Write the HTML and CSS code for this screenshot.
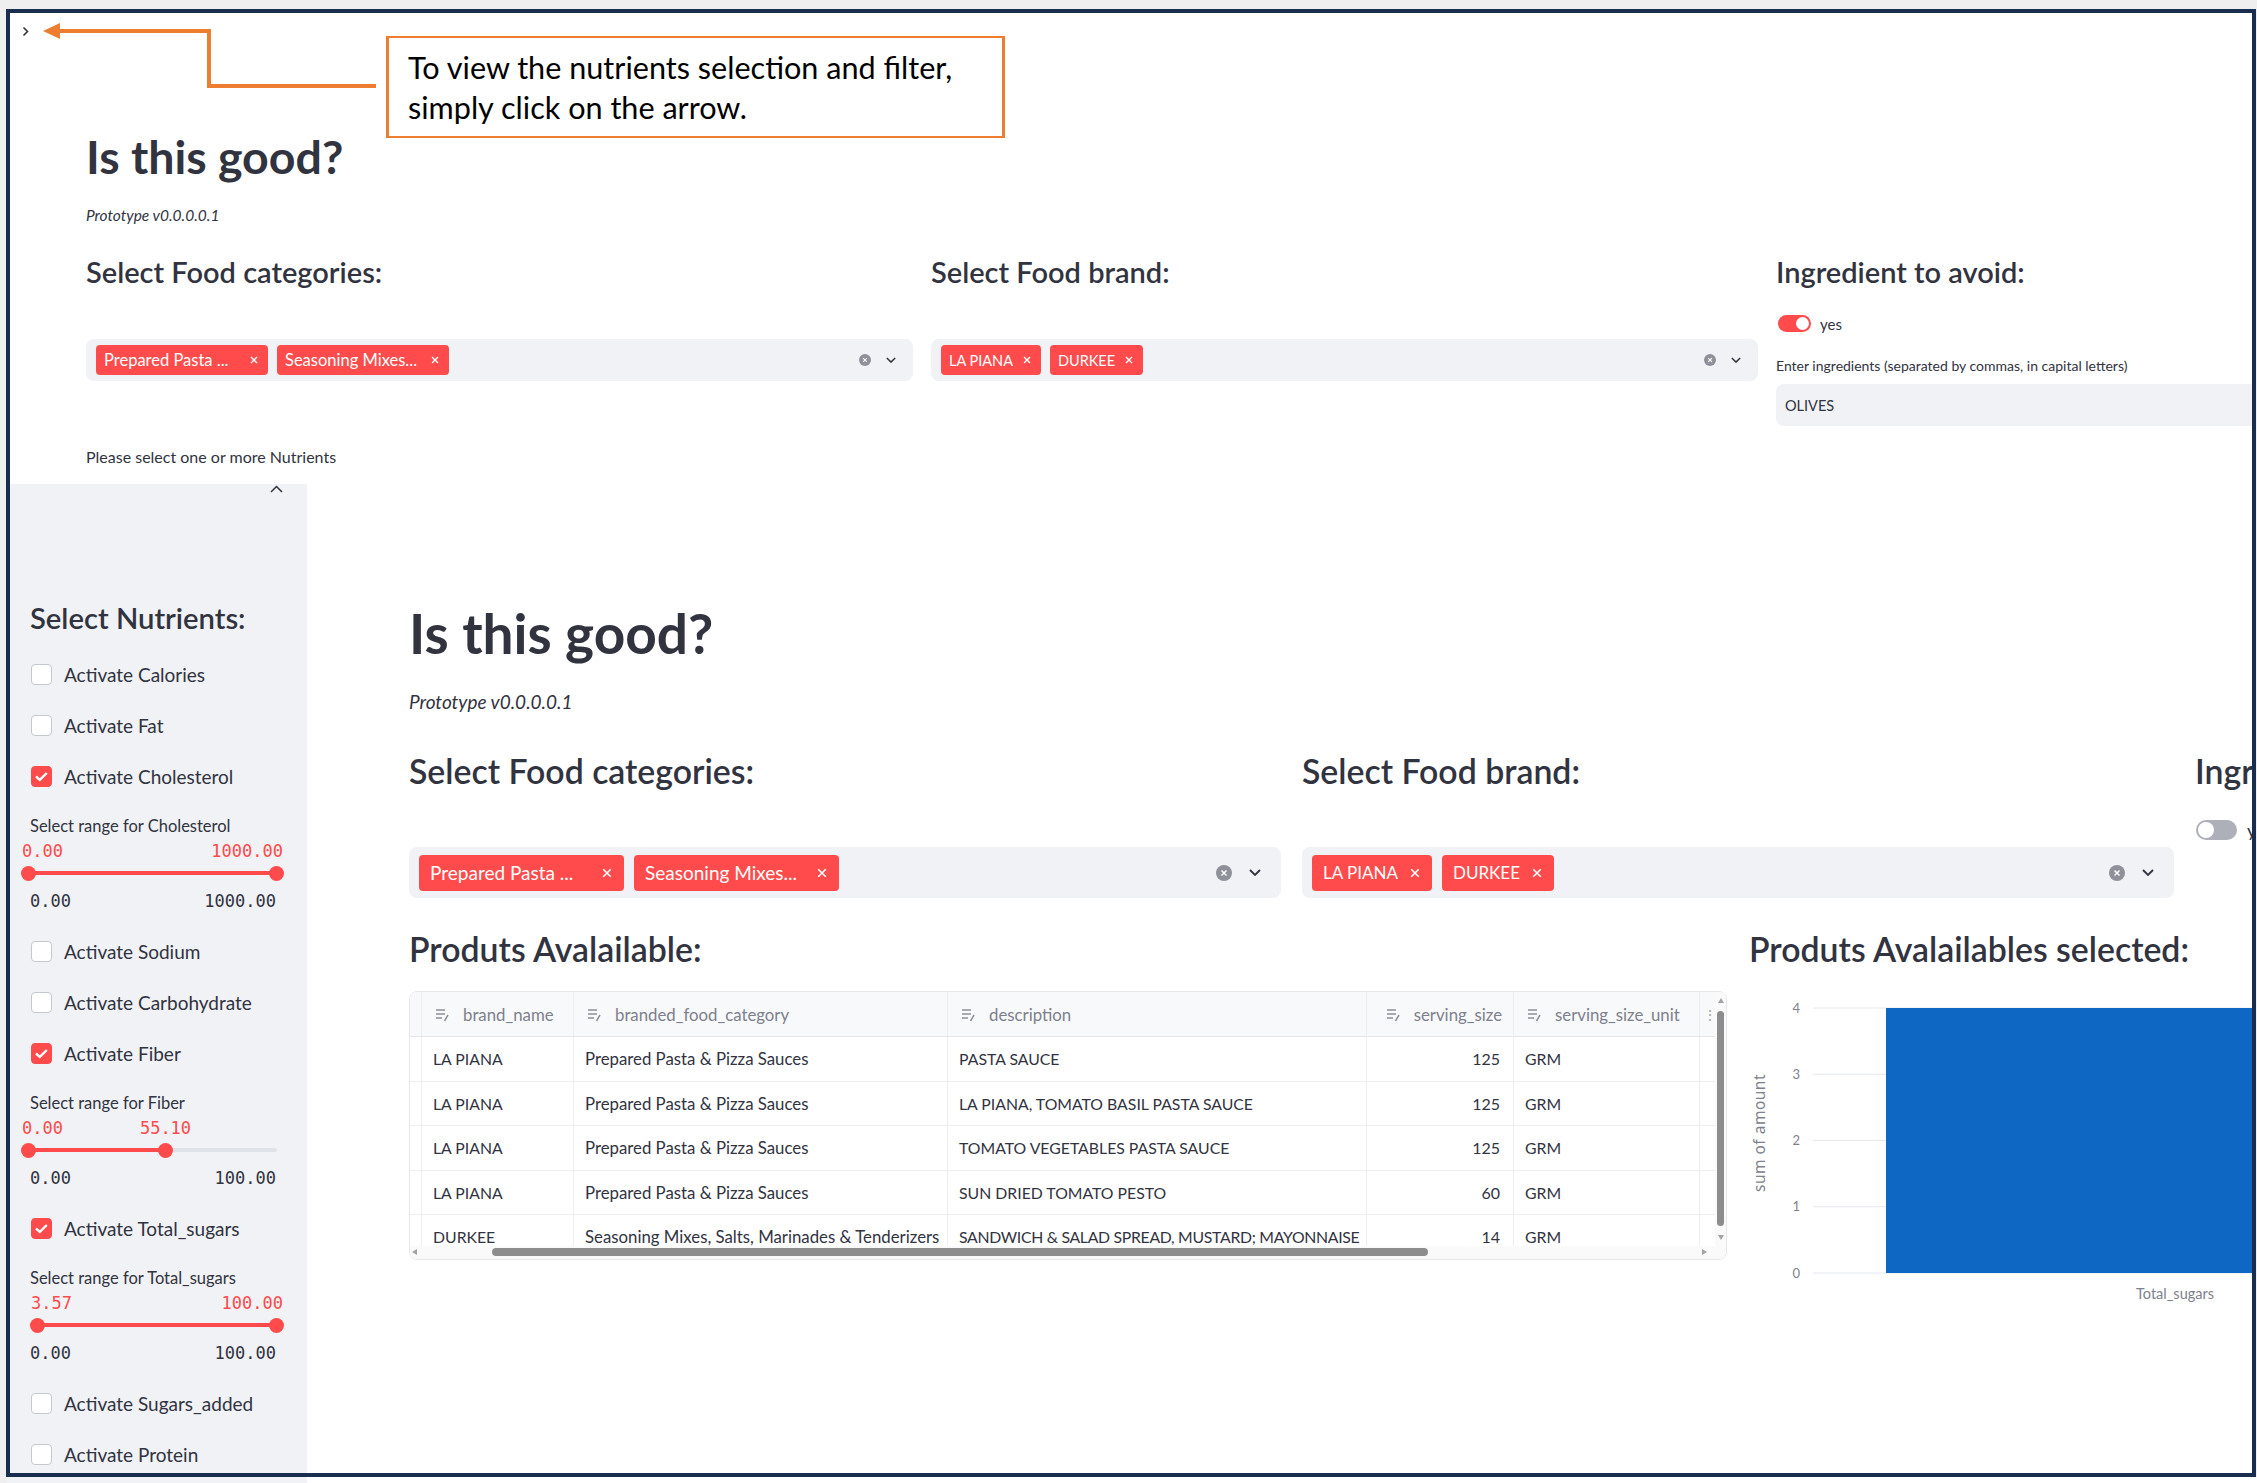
FILE: index.html
```html
<!DOCTYPE html>
<html lang="en">
<head>
<meta charset="utf-8">
<title>Is this good?</title>
<link rel="stylesheet" href="styles.css">
</head>
<body>
<div class="frame">
  <section class="top">
    <div class="collapse-bar">
      <svg class="chev-right" width="7" height="11" viewBox="0 0 7 11"><path d="M1.5 1.5 L5.5 5.5 L1.5 9.5" fill="none" stroke="#31333f" stroke-width="1.6"/></svg>
    </div>
    <div class="top-content">
      <h1 class="h1-sm">Is this good?</h1>
      <p class="proto proto-sm">Prototype v0.0.0.0.1</p>
      <div class="cols-sm">
        <div class="col-sm">
          <h3 class="h3-sm">Select Food categories:</h3>
          <div class="ms ms-sm">
            <span class="tag tag-sm tag-fixed-sm"><span class="tag-text">Prepared Pasta ...</span><svg class="tag-x" width="8" height="8" viewBox="0 0 8 8"><path d="M1 1l6 6M7 1l-6 6" stroke="#fff" stroke-width="1.4"/></svg></span>
            <span class="tag tag-sm tag-fixed-sm"><span class="tag-text">Seasoning Mixes...</span><svg class="tag-x" width="8" height="8" viewBox="0 0 8 8"><path d="M1 1l6 6M7 1l-6 6" stroke="#fff" stroke-width="1.4"/></svg></span>
            <span class="ms-icons ms-icons-sm">
              <svg width="12" height="12" viewBox="0 0 16 16"><circle cx="8" cy="8" r="8" fill="#8e909a"/><path d="M5.5 5.5l5 5M10.5 5.5l-5 5" stroke="#fff" stroke-width="1.6"/></svg>
              <svg width="10" height="6" viewBox="0 0 12 7"><path d="M1 1l5 5 5-5" fill="none" stroke="#31333f" stroke-width="1.8"/></svg>
            </span>
          </div>
        </div>
        <div class="col-sm">
          <h3 class="h3-sm">Select Food brand:</h3>
          <div class="ms ms-sm">
            <span class="tag tag-sm"><span class="tag-text">LA PIANA</span><svg class="tag-x" width="8" height="8" viewBox="0 0 8 8"><path d="M1 1l6 6M7 1l-6 6" stroke="#fff" stroke-width="1.4"/></svg></span>
            <span class="tag tag-sm"><span class="tag-text">DURKEE</span><svg class="tag-x" width="8" height="8" viewBox="0 0 8 8"><path d="M1 1l6 6M7 1l-6 6" stroke="#fff" stroke-width="1.4"/></svg></span>
            <span class="ms-icons ms-icons-sm">
              <svg width="12" height="12" viewBox="0 0 16 16"><circle cx="8" cy="8" r="8" fill="#8e909a"/><path d="M5.5 5.5l5 5M10.5 5.5l-5 5" stroke="#fff" stroke-width="1.6"/></svg>
              <svg width="10" height="6" viewBox="0 0 12 7"><path d="M1 1l5 5 5-5" fill="none" stroke="#31333f" stroke-width="1.8"/></svg>
            </span>
          </div>
        </div>
        <div class="col-sm">
          <h3 class="h3-sm">Ingredient to avoid:</h3>
          <div class="toggle-row toggle-row-sm">
            <span class="toggle toggle-sm on"><span class="knob"></span></span>
            <span>yes</span>
          </div>
          <div class="input-label-sm">Enter ingredients (separated by commas, in capital letters)</div>
          <div class="text-input-sm">OLIVES</div>
        </div>
      </div>
      <p class="note-sm">Please select one or more Nutrients</p>
    </div>

    <svg class="annot-arrow" width="400" height="90" viewBox="0 0 400 90">
      <polyline points="366,73 199,73 199,18 48,18" fill="none" stroke="#ed7d31" stroke-width="4" stroke-linejoin="miter"/>
      <polygon points="33,18 50,10 50,26" fill="#ed7d31"/>
    </svg>
    <div class="callout">To view the nutrients selection and filter,<br>simply click on the arrow.</div>
  </section>

  <section class="app">
    <aside class="sidebar">
      <div class="side-collapse">
        <svg width="13" height="8" viewBox="0 0 13 8"><path d="M1 7 L6.5 1.5 L12 7" fill="none" stroke="#31333f" stroke-width="1.5"/></svg>
      </div>
      <h3 class="side-title">Select Nutrients:</h3>

      <div class="cb-row"><span class="cb"></span><span class="cb-label">Activate Calories</span></div>
      <div class="cb-row"><span class="cb"></span><span class="cb-label">Activate Fat</span></div>
      <div class="cb-row"><span class="cb on"><svg width="21" height="21" viewBox="0 0 21 21"><path d="M5 10.5l3.8 3.3 7-6.8" fill="none" stroke="#fff" stroke-width="2.4"/></svg></span><span class="cb-label">Activate Cholesterol</span></div>
      <div class="slider">
        <div class="slider-label">Select range for Cholesterol</div>
        <div class="slider-values">
          <span class="val" style="left:-8px">0.00</span>
          <span class="val val-end" style="left:253px">1000.00</span>
        </div>
        <div class="track">
          <span class="track-fill" style="left:0%;width:100%"></span>
          <span class="thumb" style="left:0%"></span>
          <span class="thumb" style="left:100%"></span>
        </div>
        <div class="minmax"><span>0.00</span><span>1000.00</span></div>
      </div>
      <div class="cb-row"><span class="cb"></span><span class="cb-label">Activate Sodium</span></div>
      <div class="cb-row"><span class="cb"></span><span class="cb-label">Activate Carbohydrate</span></div>
      <div class="cb-row"><span class="cb on"><svg width="21" height="21" viewBox="0 0 21 21"><path d="M5 10.5l3.8 3.3 7-6.8" fill="none" stroke="#fff" stroke-width="2.4"/></svg></span><span class="cb-label">Activate Fiber</span></div>
      <div class="slider">
        <div class="slider-label">Select range for Fiber</div>
        <div class="slider-values">
          <span class="val" style="left:-8px">0.00</span>
          <span class="val val-mid" style="left:135.5px">55.10</span>
        </div>
        <div class="track">
          <span class="track-fill" style="left:0%;width:55.1%"></span>
          <span class="thumb" style="left:0%"></span>
          <span class="thumb" style="left:55.1%"></span>
        </div>
        <div class="minmax"><span>0.00</span><span>100.00</span></div>
      </div>
      <div class="cb-row"><span class="cb on"><svg width="21" height="21" viewBox="0 0 21 21"><path d="M5 10.5l3.8 3.3 7-6.8" fill="none" stroke="#fff" stroke-width="2.4"/></svg></span><span class="cb-label">Activate Total_sugars</span></div>
      <div class="slider">
        <div class="slider-label">Select range for Total_sugars</div>
        <div class="slider-values">
          <span class="val" style="left:1px">3.57</span>
          <span class="val val-end" style="left:253px">100.00</span>
        </div>
        <div class="track">
          <span class="track-fill" style="left:3.57%;width:96.43%"></span>
          <span class="thumb" style="left:3.57%"></span>
          <span class="thumb" style="left:100%"></span>
        </div>
        <div class="minmax"><span>0.00</span><span>100.00</span></div>
      </div>
      <div class="cb-row"><span class="cb"></span><span class="cb-label">Activate Sugars_added</span></div>
      <div class="cb-row"><span class="cb"></span><span class="cb-label">Activate Protein</span></div>
    </aside>

    <main class="main">
      <h1 class="h1-lg">Is this good?</h1>
      <p class="proto proto-lg">Prototype v0.0.0.0.1</p>
      <div class="cols-lg">
        <div class="col-lg">
          <h3 class="h3-lg">Select Food categories:</h3>
          <div class="ms ms-lg">
            <span class="tag tag-lg tag-fixed-lg"><span class="tag-text">Prepared Pasta ...</span><svg class="tag-x" width="10" height="10" viewBox="0 0 8 8"><path d="M1 1l6 6M7 1l-6 6" stroke="#fff" stroke-width="1.3"/></svg></span>
            <span class="tag tag-lg tag-fixed-lg"><span class="tag-text">Seasoning Mixes...</span><svg class="tag-x" width="10" height="10" viewBox="0 0 8 8"><path d="M1 1l6 6M7 1l-6 6" stroke="#fff" stroke-width="1.3"/></svg></span>
            <span class="ms-icons ms-icons-lg">
              <svg width="16" height="16" viewBox="0 0 16 16"><circle cx="8" cy="8" r="8" fill="#8e909a"/><path d="M5.5 5.5l5 5M10.5 5.5l-5 5" stroke="#fff" stroke-width="1.5"/></svg>
              <svg width="12" height="7" viewBox="0 0 12 7"><path d="M1 1l5 5 5-5" fill="none" stroke="#31333f" stroke-width="1.8"/></svg>
            </span>
          </div>
        </div>
        <div class="col-lg">
          <h3 class="h3-lg">Select Food brand:</h3>
          <div class="ms ms-lg">
            <span class="tag tag-lg"><span class="tag-text">LA PIANA</span><svg class="tag-x" width="10" height="10" viewBox="0 0 8 8"><path d="M1 1l6 6M7 1l-6 6" stroke="#fff" stroke-width="1.3"/></svg></span>
            <span class="tag tag-lg"><span class="tag-text">DURKEE</span><svg class="tag-x" width="10" height="10" viewBox="0 0 8 8"><path d="M1 1l6 6M7 1l-6 6" stroke="#fff" stroke-width="1.3"/></svg></span>
            <span class="ms-icons ms-icons-lg">
              <svg width="16" height="16" viewBox="0 0 16 16"><circle cx="8" cy="8" r="8" fill="#8e909a"/><path d="M5.5 5.5l5 5M10.5 5.5l-5 5" stroke="#fff" stroke-width="1.5"/></svg>
              <svg width="12" height="7" viewBox="0 0 12 7"><path d="M1 1l5 5 5-5" fill="none" stroke="#31333f" stroke-width="1.8"/></svg>
            </span>
          </div>
        </div>
        <div class="col-lg">
          <h3 class="h3-lg">Ingredient to avoid:</h3>
          <div class="toggle-row toggle-row-lg">
            <span class="toggle toggle-lg"><span class="knob"></span></span>
            <span>yes</span>
          </div>
        </div>
      </div>

      <div class="row2">
        <div class="col-a">
          <h3 class="h3-lg h3-row2">Produts Avalailable:</h3>
          <div class="table">
            <div class="trow thead">
              <div class="cell idx"></div>
              <div class="cell hcell"><svg class="hicon" width="18" height="18" viewBox="0 0 18 18"><path d="M2 5h9M2 9h9M2 13h6" stroke="#8c8f99" stroke-width="1.5"/><path d="M10.5 16l3.5-6" stroke="#8c8f99" stroke-width="1.5"/></svg>brand_name</div>
              <div class="cell hcell"><svg class="hicon" width="18" height="18" viewBox="0 0 18 18"><path d="M2 5h9M2 9h9M2 13h6" stroke="#8c8f99" stroke-width="1.5"/><path d="M10.5 16l3.5-6" stroke="#8c8f99" stroke-width="1.5"/></svg>branded_food_category</div>
              <div class="cell hcell"><svg class="hicon" width="18" height="18" viewBox="0 0 18 18"><path d="M2 5h9M2 9h9M2 13h6" stroke="#8c8f99" stroke-width="1.5"/><path d="M10.5 16l3.5-6" stroke="#8c8f99" stroke-width="1.5"/></svg>description</div>
              <div class="cell hcell hnum"><svg class="hicon" width="18" height="18" viewBox="0 0 18 18"><path d="M2 5h9M2 9h9M2 13h6" stroke="#8c8f99" stroke-width="1.5"/><path d="M10.5 16l3.5-6" stroke="#8c8f99" stroke-width="1.5"/></svg>serving_size</div>
              <div class="cell hcell"><svg class="hicon" width="18" height="18" viewBox="0 0 18 18"><path d="M2 5h9M2 9h9M2 13h6" stroke="#8c8f99" stroke-width="1.5"/><path d="M10.5 16l3.5-6" stroke="#8c8f99" stroke-width="1.5"/></svg>serving_size_unit</div>
              <div class="cell hcell hmore">⋮</div>
            </div>
            <div class="trow">
              <div class="cell idx"></div><div class="cell up">LA PIANA</div><div class="cell">Prepared Pasta &amp; Pizza Sauces</div><div class="cell up">PASTA SAUCE</div><div class="cell num">125</div><div class="cell up">GRM</div><div class="cell"></div>
            </div>
            <div class="trow">
              <div class="cell idx"></div><div class="cell up">LA PIANA</div><div class="cell">Prepared Pasta &amp; Pizza Sauces</div><div class="cell up">LA PIANA, TOMATO BASIL PASTA SAUCE</div><div class="cell num">125</div><div class="cell up">GRM</div><div class="cell"></div>
            </div>
            <div class="trow">
              <div class="cell idx"></div><div class="cell up">LA PIANA</div><div class="cell">Prepared Pasta &amp; Pizza Sauces</div><div class="cell up">TOMATO VEGETABLES PASTA SAUCE</div><div class="cell num">125</div><div class="cell up">GRM</div><div class="cell"></div>
            </div>
            <div class="trow">
              <div class="cell idx"></div><div class="cell up">LA PIANA</div><div class="cell">Prepared Pasta &amp; Pizza Sauces</div><div class="cell up">SUN DRIED TOMATO PESTO</div><div class="cell num">60</div><div class="cell up">GRM</div><div class="cell"></div>
            </div>
            <div class="trow">
              <div class="cell idx"></div><div class="cell up">DURKEE</div><div class="cell">Seasoning Mixes, Salts, Marinades &amp; Tenderizers</div><div class="cell up tight">SANDWICH &amp; SALAD SPREAD, MUSTARD; MAYONNAISE</div><div class="cell num">14</div><div class="cell up">GRM</div><div class="cell"></div>
            </div>
            <div class="vscroll">
              <span class="arrow-up"></span>
              <span class="vthumb"></span>
              <span class="arrow-down"></span>
            </div>
            <div class="hscroll">
              <span class="arrow-left"></span>
              <span class="hthumb"></span>
              <span class="arrow-right"></span>
            </div>
          </div>
        </div>
        <div class="col-b">
          <h3 class="h3-lg h3-row2">Produts Avalailables selected:</h3>
          <svg class="chart" width="880" height="330" viewBox="0 0 880 330">
            <g stroke="#e6e8ee" stroke-width="1">
              <line x1="64" y1="28" x2="880" y2="28"/>
              <line x1="64" y1="94.25" x2="880" y2="94.25"/>
              <line x1="64" y1="160.5" x2="880" y2="160.5"/>
              <line x1="64" y1="226.75" x2="880" y2="226.75"/>
              <line x1="64" y1="293" x2="880" y2="293"/>
            </g>
            <rect x="137" y="28" width="760" height="265" fill="#0f67c4"/>
            <g class="tick" text-anchor="end">
              <text x="51" y="32.5">4</text>
              <text x="51" y="98.5">3</text>
              <text x="51" y="165">2</text>
              <text x="51" y="231">1</text>
              <text x="51" y="297.5">0</text>
            </g>
            <text class="axis-title" transform="translate(16 153) rotate(-90)" text-anchor="middle">sum of amount</text>
            <text class="tick tick-x" x="426" y="319" text-anchor="middle">Total_sugars</text>
          </svg>
        </div>
      </div>
    </main>
  </section>
</div>
<div class="below"><div class="below-side"></div><div class="below-main"></div></div>
</body>
</html>
```

FILE: styles.css
```css
* { box-sizing: border-box; }
html, body { margin: 0; padding: 0; }
body {
  background: #efefef;
  font-family: Lato, "Noto Sans", sans-serif;
  color: #31333f;
  width: 2257px;
  height: 1483px;
  overflow: hidden;
  padding-top: 9px;
}
h1, h3, p { margin: 0; }

.frame {
  margin-left: 6px;
  width: 2250px;
  height: 1468px;
  border: 4px solid #192d4f;
  background: #fff;
  overflow: hidden;
  position: relative;
}
.below { display: flex; height: 6px; margin-left: 7px; }
.below-side { width: 300px; background: #f0f2f6; }
.below-main { flex: 1; background: #fff; }

/* ---------- top (collapsed sidebar) screenshot ---------- */
.top { height: 471px; position: relative; }
.collapse-bar { height: 36px; display: flex; align-items: center; padding-left: 12px; }
.top-content { padding-left: 76px; }
.h1-sm { margin-top: 80.4px; font-size: 46.5px; font-weight: 700; line-height: 1.2; }
.proto { font-style: italic; }
.proto-sm { margin-top: 21.2px; font-size: 15.5px; line-height: 18.6px; }
.cols-sm { display: flex; gap: 18px; margin-top: 30.3px; align-items: flex-start; }
.col-sm { width: 827px; flex: none; }
.h3-sm { font-size: 29px; font-weight: 600; line-height: 1.2; }

.ms { display: flex; align-items: center; background: #f0f2f6; border-radius: 8px; }
.ms-sm { margin-top: 49px; height: 42px; padding-left: 10px; gap: 9px; }
.ms-lg { margin-top: 55.6px; height: 51px; padding-left: 10px; gap: 10px; }
.tag {
  display: flex; align-items: center; justify-content: space-between;
  background: #ff4b4b; color: #fff; border-radius: 4px; flex: none;
}
.tag-text { white-space: nowrap; overflow: hidden; }
.tag-sm { height: 30px; font-size: 14.5px; padding: 0 10px 0 8px; gap: 10px; }
.tag-fixed-sm { width: 172px; font-size: 16.5px; }
.tag-lg { height: 36px; font-size: 17px; padding: 0 12px 0 11px; gap: 12px; }
.tag-fixed-lg { width: 205px; font-size: 19px; }
.ms-icons { margin-left: auto; display: flex; align-items: center; }
.ms-icons-sm { gap: 15px; padding-right: 17px; }
.ms-icons-lg { gap: 17px; padding-right: 20px; }

.toggle-row { display: flex; align-items: center; }
.toggle-row-sm { margin-top: 25px; height: 17px; gap: 9px; font-size: 15px; padding-left: 2px; }
.toggle-row-lg { margin-top: 28.6px; height: 20px; gap: 10px; font-size: 18px; padding-left: 1px; }
.toggle { position: relative; border-radius: 10px; background: #adb0b8; display: inline-block; flex: none; }
.toggle.on { background: #ff4b4b; }
.toggle-sm { width: 33px; height: 17px; }
.toggle-lg { width: 41px; height: 20px; }
.knob { position: absolute; top: 2px; left: 2px; border-radius: 50%; background: #fff; }
.toggle-sm .knob { width: 13px; height: 13px; left: 18px; }
.toggle-lg .knob { width: 16px; height: 16px; }

.input-label-sm { margin-top: 26.2px; font-size: 14px; line-height: 16px; height: 16px; white-space: nowrap; }
.text-input-sm {
  margin-top: 9.8px; height: 42px; background: #f0f2f6; border-radius: 8px;
  display: flex; align-items: center; padding-left: 9px; font-size: 14.5px;
}
.note-sm { margin-top: 21px; font-size: 16px; line-height: 19px; }

.annot-arrow { position: absolute; left: 0; top: 0; }
.callout {
  position: absolute; left: 376px; top: 23px; width: 619px; height: 102px;
  border: 2px solid #ed7d31; border-left-width: 3px; border-right-width: 3px;
  background: #fff; color: #000;
  padding: 10px 0 0 19px;
  font-family: Lato, "Noto Sans", sans-serif; font-size: 30.6px; line-height: 40px; white-space: nowrap;
}

/* ---------- app screenshot ---------- */
.app { display: flex; height: 989px; }
.sidebar { width: 297px; flex: none; background: #f0f2f6; padding-left: 20px; }
.side-collapse { height: 14px; display: flex; justify-content: flex-end; padding-right: 24px; padding-top: 1px; }
.side-title { margin-top: 102.1px; font-size: 29.2px; font-weight: 600; line-height: 36px; height: 36px; }
.side-title + .cb-row { margin-top: 13.4px; }
.cb-row { height: 51px; display: flex; align-items: center; }
.cb {
  width: 21px; height: 21px; margin-left: 1px; border: 1px solid #c6c8cf; border-radius: 4px;
  background: #fff; flex: none; display: flex;
}
.cb.on { background: #ff4b4b; border-color: #ff4b4b; }
.cb.on svg { margin: -1px; }
.cb-label { margin-left: 12px; font-size: 19px; white-space: nowrap; }

.slider { height: 124px; padding-top: 14px; width: 250px; }
.slider-label { font-size: 16.5px; line-height: 20px; height: 20px; white-space: nowrap; }
.slider-values {
  position: relative; height: 20px; margin-top: 5px;
  font-family: "DejaVu Sans Mono", "Liberation Mono", monospace; font-size: 17px; line-height: 20px; color: #ff4b4b;
}
.val { position: absolute; top: 0; white-space: nowrap; }
.val-end { transform: translateX(-100%); }
.val-mid { transform: translateX(-50%); }
.track { position: relative; height: 16px; margin-top: 4px; margin-left: -1.5px; width: 248px; }
.track::before {
  content: ""; position: absolute; left: 0; right: 0; top: 6px; height: 4px; border-radius: 2px; background: #dfe2e8;
}
.track-fill { position: absolute; top: 6px; height: 4px; background: #ff4b4b; border-radius: 2px; }
.thumb {
  position: absolute; top: 0.5px; width: 15px; height: 15px; margin-left: -7.5px; border-radius: 50%; background: #ff4b4b;
}
.minmax {
  display: flex; justify-content: space-between; width: 246px; margin-top: 10px; height: 20px;
  font-family: "DejaVu Sans Mono", "Liberation Mono", monospace; font-size: 17px; line-height: 20px; color: #31333f;
}

.main { flex: 1; min-width: 0; padding-left: 102px; }
.h1-lg { margin-top: 116.1px; font-size: 55px; font-weight: 700; line-height: 1.2; }
.proto-lg { margin-top: 25px; font-size: 19px; line-height: 22.8px; }
.cols-lg { display: flex; gap: 21px; margin-top: 37px; align-items: flex-start; }
.col-lg { width: 872px; flex: none; }
.h3-lg { font-size: 33.8px; font-weight: 600; line-height: 1.2; white-space: nowrap; }

.row2 { display: flex; gap: 22px; margin-top: 31.1px; align-items: flex-start; }
.col-a { width: 1318px; flex: none; }
.col-b { width: 880px; flex: none; }

.table {
  margin-top: 21.4px; height: 269px; border: 1px solid #e6e8ee; border-radius: 8px;
  position: relative; overflow: hidden; font-size: 16.8px;
}
.trow { display: grid; grid-template-columns: 12px 152px 374px 419px 147px 186px 16px; height: 44.5px; }
.thead { height: 45px; background: #f8f9fb; border-bottom: 1px solid #e3e5ea; }
.cell {
  display: flex; align-items: center; padding: 0 11px; white-space: nowrap; overflow: hidden;
  border-right: 1px solid #eceef2; border-bottom: 1px solid #eceef2;
}
.cell.up { font-size: 15.8px; }
.cell.tight { letter-spacing: -0.3px; }
.thead .cell { border-bottom: none; }
.cell.idx { padding: 0; }
.cell.num { justify-content: flex-end; padding-right: 13px; font-size: 16px; }
.hcell { color: #7d808b; padding-left: 12px; font-size: 16.8px; }
.hcell .hicon { margin-right: 11px; flex: none; }
.hnum { justify-content: flex-end; }
.hmore { padding: 0 0 0 3px; color: #a0a3ab; border-right: none; font-size: 14px; }

.vscroll { position: absolute; right: 0; top: 0; width: 11px; height: 256px; background: #fafafa; }
.vthumb { position: absolute; left: 2px; top: 19px; width: 7px; height: 215px; border-radius: 4px; background: #8d8d8d; }
.arrow-up, .arrow-down, .arrow-left, .arrow-right { position: absolute; width: 0; height: 0; }
.arrow-up { left: 2.5px; top: 6px; border-left: 3px solid transparent; border-right: 3px solid transparent; border-bottom: 5px solid #a3a3a3; }
.arrow-down { left: 2.5px; top: 243px; border-left: 3px solid transparent; border-right: 3px solid transparent; border-top: 5px solid #a3a3a3; }
.hscroll { position: absolute; left: 0; right: 0; bottom: 0; height: 13px; background: #fafafa; }
.hthumb { position: absolute; left: 82px; top: 2px; width: 936px; height: 8px; border-radius: 4px; background: #8d8d8d; }
.arrow-left { left: 2px; top: 3px; border-top: 3px solid transparent; border-bottom: 3px solid transparent; border-right: 5px solid #a3a3a3; }
.arrow-right { left: 1292px; top: 3px; border-top: 3px solid transparent; border-bottom: 3px solid transparent; border-left: 5px solid #a3a3a3; }

.chart { display: block; margin-top: 10.4px; }
.tick { font-family: Lato, "Noto Sans", sans-serif; font-size: 13px; fill: #7e818c; }
.tick-x { font-size: 14.5px; }
.axis-title { font-family: "Noto Sans", Lato, sans-serif; font-size: 15.5px; fill: #7e818c; letter-spacing: 0.5px; }
```
